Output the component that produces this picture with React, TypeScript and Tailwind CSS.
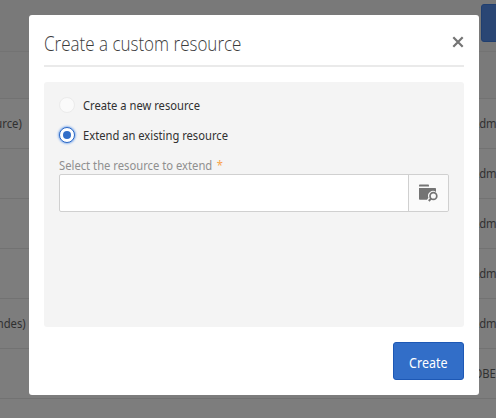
import React from "react";

const rows = [
  { name: "Custom resource (resource)", owner: "Administrator", left: "w-[22px]", right: "w-[24px]" },
  { name: "", owner: "Administrator", left: "w-[22px]", right: "w-[24px]" },
  { name: "", owner: "Administrator", left: "w-[22px]", right: "w-[24px]" },
  { name: "", owner: "Administrator", left: "w-[22px]", right: "w-[24px]" },
  { name: "Orders (commandes)", owner: "Administrator", left: "w-[26px]", right: "w-[24px]" },
  { name: "", owner: "ADOBE", left: "w-[22px]", right: "w-[38px]" },
];

function Backdrop() {
  return (
    <div className="flex h-full flex-col bg-[#7d7d7d] text-[12.5px] text-[#303030]">
      <div className="flex h-[52px] shrink-0 justify-end border-b border-[#737373] bg-[#797979] pt-1">
        <div className="-mr-1 h-[38px] w-[19px] rounded-[3px] border border-[#203f70] bg-[#2a4674]" />
      </div>
      <div className="h-[47px] shrink-0 border-b border-[#727272] bg-[#7a7a7a]" />
      {rows.map((row, i) => (
        <div key={i} className="flex h-[50px] shrink-0 items-center justify-between border-b border-[#727272] pt-0.5 whitespace-nowrap">
          <div className={`flex justify-end ${row.left}`}>
            <span className="origin-right scale-x-90">{row.name}</span>
          </div>
          <div className={row.right}>
            <span className="inline-block origin-left scale-x-90">{row.owner}</span>
          </div>
        </div>
      ))}
    </div>
  );
}

function Radio({ label, checked }: { label: string; checked?: boolean }) {
  return (
    <label className="flex h-[30px] items-center gap-2 text-[12.5px] text-[#303030]">
      {checked ? (
        <span className="flex size-4 items-center justify-center rounded-full border border-[#2b67c4] bg-white shadow-[0_0_2px_1px_#8cb4ee]">
          <span className="size-2 rounded-full bg-[#326ec8]" />
        </span>
      ) : (
        <span className="size-4 rounded-full border border-[#ebebeb] bg-[#fafafa]" />
      )}
      <span className="origin-left scale-x-[0.895] pt-[3px] whitespace-nowrap">{label}</span>
    </label>
  );
}

export default function App() {
  return (
    <div className="relative h-[418px] w-[496px] overflow-hidden font-['Noto_Sans','Open_Sans',sans-serif]">
      <Backdrop />
      <div className="absolute top-[15px] left-[29px] flex h-[380px] w-[450px] flex-col rounded-[3px] bg-white px-[15px]">
        <header className="flex h-[52px] shrink-0 items-center justify-between border-b-2 border-[#eaeaea] pt-1.5">
          <h1 className="origin-left scale-x-[0.872] pt-0.5 font-['Open_Sans'] text-[19.5px] leading-6 font-light whitespace-nowrap text-[#3c3c3c]">Create a custom resource</h1>
          <button aria-label="Close" className="-mt-0.5">
            <svg width="12" height="12" viewBox="0 0 12 12" fill="none" stroke="#747474" strokeWidth="2.2">
              <path d="M1.3 1.3 10.7 10.7M10.7 1.3 1.3 10.7" />
            </svg>
          </button>
        </header>
        <main className="mt-[15px] h-[245px] shrink-0 rounded-[3px] bg-[#f4f4f4] px-[15px] pt-2">
          <Radio label="Create a new resource" />
          <Radio label="Extend an existing resource" checked />
          <div className="mt-1.5 flex h-[18px] origin-left scale-x-[0.898] items-center gap-[5px] pt-0.5 text-[12.5px] whitespace-nowrap text-[#8f8f8f]">
            <span>Select the resource to extend</span>
            <span className="text-[#f9a44a]">*</span>
          </div>
          <div className="flex h-[38px] rounded-[2px] border border-[#d0d0d0] bg-white">
            <div className="flex-1" />
            <div className="flex w-10 items-center justify-center rounded-r-[2px] border-l border-[#d0d0d0] bg-[#fafafa]">
              <svg width="19" height="18" viewBox="0 0 19 18" fill="none">
                <path d="M0 2.4V1.3Q0 .5.8.5H9.2Q10 .5 10 1.3V2.4Z" fill="#747474" />
                <path d="M0 4H16.2Q17 4 17 4.8V7.9A5 5 0 0 0 9.4 13.8L8 15.8H.8Q0 15.8 0 15Z" fill="#747474" />
                <circle cx="14.4" cy="12" r="3.4" stroke="#747474" strokeWidth="1.7" />
                <path d="m12.2 14.4-2.4 2.6" stroke="#747474" strokeWidth="2" />
              </svg>
            </div>
          </div>
        </main>
        <footer className="flex justify-end pt-[15px]">
          <button className="flex h-[38px] w-[71px] items-center justify-center rounded-[3px] border border-[#1d58b5] bg-[#326ec8] pt-1 text-[14.5px] text-white">
            <span className="scale-x-[0.86]">Create</span>
          </button>
        </footer>
      </div>
    </div>
  );
}
